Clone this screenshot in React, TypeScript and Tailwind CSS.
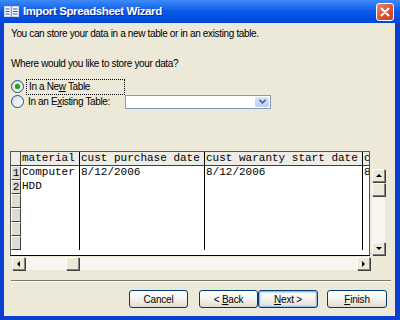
const ui = "font-['Liberation_Sans',Arial,sans-serif]";
const mono = "font-['Liberation_Mono','Courier_New',monospace]";

function Radio({ checked }: { checked: boolean }) {
  return (
    <span className="flex h-[13px] w-[13px] shrink-0 items-center justify-center rounded-full border border-[#1c5180] bg-gradient-to-br from-[#dcdcd5] to-white">
      {checked ? (
        <span className="h-[5px] w-[5px] rounded-full bg-[#21a121] shadow-[0_0_1px_#4fd04f]" />
      ) : null}
    </span>
  );
}

function Arrow({ dir }: { dir: "up" | "down" | "left" | "right" }) {
  const pts = {
    up: "1,5 4,2 7,5",
    down: "1,2 4,5 7,2",
    left: "5,1 2,4 5,7",
    right: "2,1 5,4 2,7",
  }[dir];
  return (
    <svg width="7" height="7" viewBox="0 0 7 7">
      <polygon points={pts} fill="#000" />
    </svg>
  );
}

function ScrollBtn({ dir }: { dir: "up" | "down" | "left" | "right" }) {
  return (
    <div className="flex h-[13px] w-[13px] shrink-0 items-center justify-center border border-t-white border-l-white border-r-[#808080] border-b-[#808080] bg-[#ece9d8] shadow-[1px_1px_0_#404040]">
      <Arrow dir={dir} />
    </div>
  );
}

function XpButton({
  children,
  focused,
  w = "w-[59px]",
}: {
  children: React.ReactNode;
  focused?: boolean;
  w?: string;
}) {
  return (
    <button
      type="button"
      className={`${w} flex h-[18px] items-center justify-center rounded-[3px] border border-[#003c74] bg-gradient-to-b from-white via-[#f4f3ee] to-[#dedbd0] text-[10px] tracking-[-0.2px] text-black ${
        focused ? "shadow-[inset_0_0_0_1px_#9ebbf0,inset_0_0_0_2px_#cde0fb]" : ""
      }`}
    >
      <span>{children}</span>
    </button>
  );
}

const rows = [
  ["1", "Computer", "8/12/2006", "8/12/2006", "8"],
  ["2", "HDD", "", "", ""],
  ["", "", "", "", ""],
  ["", "", "", "", ""],
  ["", "", "", "", ""],
  ["", "", "", "", ""],
];

const cols = ["w-[59px]", "w-[125px]", "w-[158px]", "w-[7px]"];

export default function App() {
  return (
    <div className={`${ui} flex h-[320px] w-[400px] flex-col overflow-hidden bg-[#0a3fd0]`}>
      <div className="flex h-[23px] shrink-0 items-center bg-gradient-to-b from-[#3d8af7] via-[#0a5ae8] to-[#0046d6] px-[4px]">
        <svg width="15" height="11" viewBox="0 0 15 11" className="shrink-0">
          <rect x="0.5" y="0.5" width="6" height="10" fill="#fff" stroke="#cfd8f0" />
          <rect x="8" y="0.5" width="6.5" height="10" fill="#fff" stroke="#cfd8f0" />
          <line x1="1.5" y1="3" x2="5.5" y2="3" stroke="#1f4fc4" />
          <line x1="1.5" y1="5.5" x2="5.5" y2="5.5" stroke="#1f4fc4" />
          <line x1="1.5" y1="8" x2="5.5" y2="8" stroke="#1f4fc4" />
          <line x1="9" y1="3" x2="13.5" y2="3" stroke="#1f4fc4" />
          <line x1="9" y1="5.5" x2="13.5" y2="5.5" stroke="#1f4fc4" />
          <line x1="9" y1="8" x2="13.5" y2="8" stroke="#1f4fc4" />
        </svg>
        <span className="ml-[4px] text-[11.5px] font-bold tracking-[-0.4px] text-white [text-shadow:1px_1px_0_#0a2a8a]">
          Import Spreadsheet Wizard
        </span>
        <div className="ml-auto mr-[2px] flex h-[18px] w-[18px] items-center justify-center rounded-[3px] border border-white bg-gradient-to-br from-[#e8876c] via-[#d9573a] to-[#c2401e]">
          <svg width="10" height="10" viewBox="0 0 10 10">
            <path d="M1.5 1.5 L8.5 8.5 M8.5 1.5 L1.5 8.5" stroke="#fff" strokeWidth="2" strokeLinecap="round" />
          </svg>
        </div>
      </div>

      <div className="mb-[4px] ml-[4px] mr-[5px] flex flex-1 flex-col bg-[#ece9d8] px-[7px] text-[10px] tracking-[-0.35px] text-black">
        <p className="mt-[5px] h-[12px] leading-[12px]">
          You can store your data in a new table or in an existing table.
        </p>
        <p className="mt-[18px] h-[12px] leading-[12px]">Where would you like to store your data?</p>

        <div className="mt-[9px] flex h-[15px] items-center">
          <Radio checked />
          <span className="ml-[2px] flex h-[16px] w-[99px] items-center border border-dotted border-black pl-[2px]">
            <span>
              In a Ne<u>w</u> Table
            </span>
          </span>
        </div>
        <div className="flex h-[15px] items-center">
          <Radio checked={false} />
          <span className="ml-[4px] w-[96px]">
            In an E<u>x</u>isting Table:
          </span>
          <div className="ml-[1px] flex h-[14px] w-[146px] items-center justify-end border border-[#7f9db9] bg-white p-[1px]">
            <div className="flex h-full w-[14px] items-center justify-center rounded-[2px] bg-gradient-to-b from-[#dbe6fb] to-[#b6cdf6]">
              <svg width="7" height="5" viewBox="0 0 7 5">
                <path d="M0.5 0.8 L3.5 3.8 L6.5 0.8" stroke="#4d6185" strokeWidth="1.6" fill="none" />
              </svg>
            </div>
          </div>
        </div>

        <div className="ml-[-1px] mt-[42px] flex items-start tracking-normal">
          <div className="flex w-[360px] flex-col">
            <div className={`${mono} h-[105px] overflow-hidden border border-[#555] border-b-black bg-white text-[11px] leading-[13px]`}>
              <div className="flex h-[14px] border-b border-[#404040] bg-[#eeece6]">
                <div className="w-[10px] shrink-0 border-r border-[#404040]" />
                {["material", "cust purchase date", "cust waranty start date", "c"].map((h, i) => (
                  <div key={h} className={`${cols[i]} shrink-0 overflow-hidden whitespace-nowrap border-r border-black pl-[1px]`}>
                    {h}
                  </div>
                ))}
              </div>
              {rows.map((r, ri) => (
                <div key={ri} className="flex h-[14px]">
                  <div className="flex w-[10px] shrink-0 items-center justify-center border border-t-white border-l-white border-r-[#404040] border-b-[#404040] bg-[#dedbd2]">
                    {r[0]}
                  </div>
                  {r.slice(1).map((c, ci) => (
                    <div key={ci} className={`${cols[ci]} shrink-0 overflow-hidden whitespace-nowrap border-r border-black pl-[1px]`}>
                      {c}
                    </div>
                  ))}
                </div>
              ))}
            </div>
            <div className="ml-[2px] mt-[1px] flex h-[13px] w-[358px] bg-[#f6f5f0]">
              <ScrollBtn dir="left" />
              <div className="ml-[41px] h-[13px] w-[13px] border border-t-white border-l-white border-r-[#808080] border-b-[#808080] bg-[#ece9d8] shadow-[1px_1px_0_#404040]" />
              <div className="flex-1" />
              <ScrollBtn dir="right" />
            </div>
          </div>
          <div className="ml-[2px] mt-[18px] flex h-[86px] w-[13px] flex-col bg-[#f6f5f0]">
            <ScrollBtn dir="up" />
            <div className="mt-[1px] h-[13px] w-[13px] border border-t-white border-l-white border-r-[#808080] border-b-[#808080] bg-[#ece9d8] shadow-[1px_1px_0_#404040]" />
            <div className="flex-1" />
            <ScrollBtn dir="down" />
          </div>
        </div>

        <div className="mt-[10px] h-[2px] w-[380px] border-t border-[#7a786f] border-b border-b-white" />

        <div className="mt-[8px] flex items-center">
          <div className="ml-[118px]">
            <XpButton>Cancel</XpButton>
          </div>
          <div className="ml-[11px]">
            <XpButton>
              &lt; <u>B</u>ack
            </XpButton>
          </div>
          <XpButton focused w="w-[60px]">
            <u>N</u>ext &gt;
          </XpButton>
          <div className="ml-[9px]">
            <XpButton w="w-[60px]">
              <u>F</u>inish
            </XpButton>
          </div>
        </div>
      </div>
    </div>
  );
}
